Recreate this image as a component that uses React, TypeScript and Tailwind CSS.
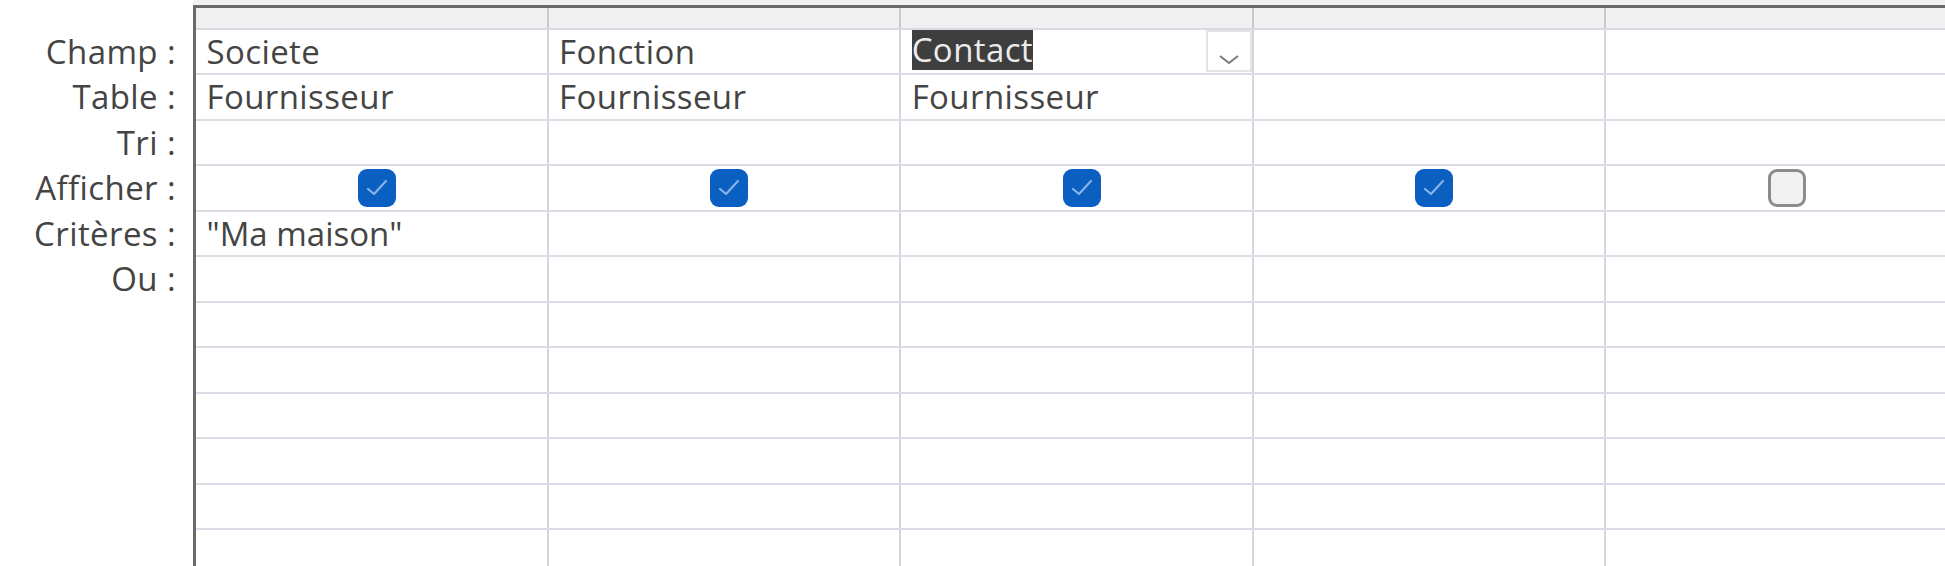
import React from 'react';

const labels = ['Champ :', 'Table :', 'Tri :', 'Afficher :', 'Critères :', 'Ou :'];

const champs = ['Societe', 'Fonction', 'Contact', '', '', ''];
const tables = ['Fournisseur', 'Fournisseur', 'Fournisseur', '', '', ''];
const afficher = [true, true, true, true, false, null];
const criteres = ['"Ma maison"', '', '', '', '', ''];

const COLS = 6;
const EMPTY_ROWS = 7;

function Cell({ children, className = '' }: { children?: React.ReactNode; className?: string }) {
  return (
    <div
      className={`relative flex h-full w-[352.6px] shrink-0 items-center border-r-2 border-[#d3d6dd] pl-[10.5px] ${className}`}
    >
      {children}
    </div>
  );
}

function Row({ children }: { children: React.ReactNode }) {
  return <div className="flex h-[45.5px] shrink-0 border-b-2 border-[#d8dde6]">{children}</div>;
}

function CheckBox({ checked }: { checked: boolean }) {
  if (!checked) {
    return <div className="h-[38px] w-[38px] rounded-[9px] border-[3px] border-[#8c8c8c] bg-[#f2f2f2]" />;
  }
  return (
    <div className="flex h-[38px] w-[38px] items-center justify-center rounded-[9px] bg-[#0b5fc1]">
      <svg width="38" height="38" viewBox="0 0 38 38">
        <polyline
          points="10,20 16,25 28,12"
          fill="none"
          stroke="rgba(190,215,245,0.7)"
          strokeWidth="2.2"
          strokeLinecap="round"
          strokeLinejoin="round"
        />
      </svg>
    </div>
  );
}

export default function App() {
  return (
    <div className="flex h-[566px] w-[1945px] overflow-hidden bg-white font-['Open_Sans',sans-serif] text-[33px] tracking-[0.4px] text-[#444444]">
      <div className="w-[193px] shrink-0 pr-[17px] pt-[29.5px] text-right">
        {labels.map((l) => (
          <div key={l} className="h-[45.5px] whitespace-nowrap leading-[43.5px]">
            {l}
          </div>
        ))}
      </div>

      <div className="flex min-w-0 flex-1 flex-col overflow-hidden">
        <div className="h-[5px] shrink-0 bg-[#f1f1f1]" />
        <div className="flex flex-1 flex-col overflow-hidden border-l-[3px] border-t-[3px] border-[#6a6a6a]">
          <div className="flex h-[21.5px] shrink-0 border-b-2 border-[#d6dbe4] bg-[#f0f0f0]">
            {Array.from({ length: COLS }).map((_, i) => (
              <div key={i} className="h-full w-[352.6px] shrink-0 border-r-2 border-[#c8c9cc]" />
            ))}
          </div>

          <Row>
            {champs.map((c, i) => (
              <Cell key={i} className={i === 2 ? 'items-start' : ''}>
                {i === 2 ? (
                  <>
                    <span className="mt-[0.5px] inline-block h-[40px] bg-[#3e3e3e] leading-[40px] text-[#ececec]">
                      {c}
                    </span>
                    <div className="absolute right-0 top-[0.5px] flex h-[42px] w-[46px] items-end justify-center border-2 border-[#e4e4e4] bg-white pb-[4px]">
                      <svg width="24" height="13" viewBox="0 0 24 13">
                        <polyline
                          points="3,3 12,10 21,3"
                          fill="none"
                          stroke="#7a7a7a"
                          strokeWidth="2"
                        />
                      </svg>
                    </div>
                  </>
                ) : (
                  <span className="leading-[43.5px]">{c}</span>
                )}
              </Cell>
            ))}
          </Row>

          <Row>
            {tables.map((t, i) => (
              <Cell key={i}>
                <span className="leading-[43.5px]">{t}</span>
              </Cell>
            ))}
          </Row>

          <Row>
            {Array.from({ length: COLS }).map((_, i) => (
              <Cell key={i} />
            ))}
          </Row>

          <Row>
            {afficher.map((a, i) => (
              <Cell key={i} className="justify-center pl-0">
                {a !== null && <CheckBox checked={a} />}
              </Cell>
            ))}
          </Row>

          <Row>
            {criteres.map((c, i) => (
              <Cell key={i}>
                <span className="leading-[43.5px] tracking-[0px]">{c}</span>
              </Cell>
            ))}
          </Row>

          {Array.from({ length: EMPTY_ROWS }).map((_, r) => (
            <Row key={r}>
              {Array.from({ length: COLS }).map((_, i) => (
                <Cell key={i} />
              ))}
            </Row>
          ))}
        </div>
      </div>
    </div>
  );
}
